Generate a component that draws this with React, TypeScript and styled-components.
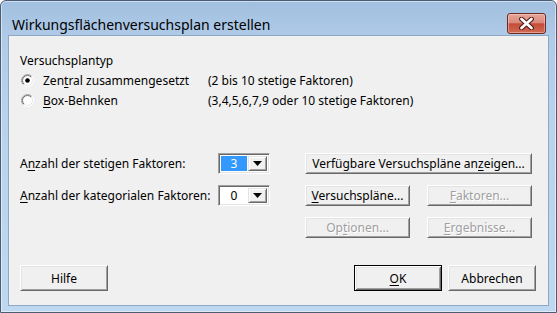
import React from "react";
import styled, { createGlobalStyle } from "styled-components";

const GlobalStyle = createGlobalStyle`
  html, body {
    margin: 0;
    padding: 0;
    background: #ffffff;
  }
  body {
    font-family: "Noto Sans", "Liberation Sans", sans-serif;
    font-size: 12px;
    color: #000;
  }
`;

const Window = styled.div`
  box-sizing: border-box;
  width: 557px;
  height: 313px;
  display: flex;
  flex-direction: column;
  padding: 0 7px 6px 7px;
  border: 1px solid #4a5d74;
  border-radius: 6px 6px 0 0;
  background: linear-gradient(180deg, #a1bfdf 0%, #b0cbe8 12%, #bad3ed 40%, #bed8f1 100%);
  box-shadow: inset 0 0 0 1px rgba(255, 255, 255, 0.5);
`;

const TitleBar = styled.div`
  box-sizing: border-box;
  height: 34px;
  display: flex;
  align-items: center;
  justify-content: space-between;
  padding: 10px 3px 0 4px;
`;

const Title = styled.div`
  padding-top: 3px;
  font-size: 14px;
  color: #000;
`;

const CloseButton = styled.div`
  box-sizing: border-box;
  width: 39px;
  height: 21px;
  display: flex;
  align-items: center;
  justify-content: center;
  border: 1px solid #6b2b25;
  border-radius: 3px;
  background: linear-gradient(180deg, #e6a699 0%, #d98a7c 45%, #c44d39 52%, #d06a52 100%);
  box-shadow: inset 0 0 0 1px rgba(255, 220, 210, 0.45);
`;

const Client = styled.div`
  flex: 1;
  display: flex;
  flex-direction: column;
  padding: 16px 12px 0 11px;
  border: 1px solid #8ea7c2;
  background: #f0f0f0;
`;

const GroupLabel = styled.div`
  height: 18px;
  line-height: 18px;
`;

const RadioGrid = styled.div`
  display: grid;
  grid-template-columns: 188px auto;
  grid-auto-rows: 20px;
  align-items: center;
`;

const RadioLabel = styled.div`
  display: flex;
  align-items: center;
  gap: 9px;
  padding-left: 1px;
`;

const FactorsArea = styled.div`
  display: flex;
  margin-top: 43px;
`;

const FactorColumn = styled.div`
  width: 285px;
  display: flex;
  flex-direction: column;
  gap: 11px;
`;

const FactorRow = styled.div`
  height: 21px;
  display: flex;
  align-items: center;
  justify-content: space-between;
  padding-right: 35px;
`;

const Combo = styled.div`
  box-sizing: border-box;
  width: 52px;
  height: 21px;
  display: flex;
  padding: 2px;
  background: #fff;
  border: 1px solid;
  border-color: #a0a0a0 #ffffff #ffffff #a0a0a0;
  box-shadow: inset 1px 1px #696969, inset -1px -1px #e3e3e3;
`;

const ComboValue = styled.div<{ $selected?: boolean }>`
  flex: 1;
  display: flex;
  align-items: center;
  justify-content: center;
  margin: 0 1px 0 0;
  background: ${(p) => (p.$selected ? "#3399ff" : "transparent")};
  color: ${(p) => (p.$selected ? "#fff" : "#000")};
`;

const ComboArrow = styled.div`
  box-sizing: border-box;
  width: 19px;
  display: flex;
  align-items: center;
  justify-content: center;
  background: #f0f0f0;
  border: 1px solid;
  border-color: #e3e3e3 #696969 #696969 #e3e3e3;
  box-shadow: inset 1px 1px #fff, inset -1px -1px #a0a0a0;
`;

const ButtonGrid = styled.div`
  display: grid;
  grid-template-columns: 105px 105px;
  grid-auto-rows: 21px;
  column-gap: 17px;
  row-gap: 11px;
`;

const Button = styled.button<{ $default?: boolean; $wide?: boolean }>`
  box-sizing: border-box;
  height: 100%;
  padding: 0;
  grid-column: ${(p) => (p.$wide ? "1 / span 2" : "auto")};
  font-family: inherit;
  font-size: 12px;
  color: #000;
  background: #f0f0f0;
  border: 1px solid;
  border-color: ${(p) => (p.$default ? "#000" : "#fff #696969 #696969 #fff")};
  box-shadow: ${(p) =>
    p.$default
      ? "inset 1px 1px #fff, inset -1px -1px #696969, inset 2px 2px #e3e3e3, inset -2px -2px #a0a0a0"
      : "inset 1px 1px #e3e3e3, inset -1px -1px #a0a0a0"};

  &:disabled {
    color: #a0a0a0;
    text-shadow: 1px 1px #fff;
  }
`;

const Footer = styled.div`
  display: flex;
  align-items: center;
  gap: 6px;
  margin-top: 27px;
  height: 26px;
`;

const FooterButton = styled(Button)`
  width: 88px;
  height: 26px;
`;

const Spacer = styled.div`
  flex: 1;
`;

const Key = styled.u`
  text-decoration-thickness: 1px;
  text-underline-offset: 2px;
`;

const RadioIcon = ({ checked }: { checked?: boolean }) => (
  <svg width="13" height="13" viewBox="0 0 13 13">
    <defs>
      <linearGradient id="ro" x1="0" y1="0" x2="1" y2="1">
        <stop offset="0.45" stopColor="#a0a0a0" />
        <stop offset="0.55" stopColor="#ffffff" />
      </linearGradient>
      <linearGradient id="ri" x1="0" y1="0" x2="1" y2="1">
        <stop offset="0.45" stopColor="#696969" />
        <stop offset="0.55" stopColor="#e3e3e3" />
      </linearGradient>
    </defs>
    <circle cx="6.5" cy="6.5" r="6" fill="#fff" stroke="url(#ro)" strokeWidth="1" />
    <circle cx="6.5" cy="6.5" r="5" fill="#fff" stroke="url(#ri)" strokeWidth="1" />
    {checked && <circle cx="6.5" cy="6.5" r="2.3" fill="#000" />}
  </svg>
);

const DownArrow = () => (
  <svg width="9" height="5" viewBox="0 0 9 5">
    <path d="M0 0 H9 L4.5 5 Z" fill="#000" />
  </svg>
);

const CloseGlyph = () => (
  <svg width="15" height="13" viewBox="0 0 15 13">
    <path
      d="M2.5 2 L12.5 11 M12.5 2 L2.5 11"
      fill="none"
      stroke="#4a1712"
      strokeWidth="4.8"
      strokeLinecap="round"
    />
    <path
      d="M2.5 2 L12.5 11 M12.5 2 L2.5 11"
      fill="none"
      stroke="#ffffff"
      strokeWidth="2.8"
      strokeLinecap="round"
    />
  </svg>
);

export default function App() {
  return (
    <>
      <GlobalStyle />
      <Window>
        <TitleBar>
          <Title>Wirkungsflächenversuchsplan erstellen</Title>
          <CloseButton>
            <CloseGlyph />
          </CloseButton>
        </TitleBar>
        <Client>
          <GroupLabel>Versuchsplantyp</GroupLabel>
          <RadioGrid>
            <RadioLabel>
              <RadioIcon checked />
              <span>
                Zen<Key>t</Key>ral zusammengesetzt
              </span>
            </RadioLabel>
            <span>(2 bis 10 stetige Faktoren)</span>
            <RadioLabel>
              <RadioIcon />
              <span>
                <Key>B</Key>ox-Behnken
              </span>
            </RadioLabel>
            <span>(3,4,5,6,7,9 oder 10 stetige Faktoren)</span>
          </RadioGrid>

          <FactorsArea>
            <FactorColumn>
              <FactorRow>
                <span>
                  A<Key>n</Key>zahl der stetigen Faktoren:
                </span>
                <Combo>
                  <ComboValue $selected>3</ComboValue>
                  <ComboArrow>
                    <DownArrow />
                  </ComboArrow>
                </Combo>
              </FactorRow>
              <FactorRow>
                <span>
                  <Key>A</Key>nzahl der kategorialen Faktoren:
                </span>
                <Combo>
                  <ComboValue>0</ComboValue>
                  <ComboArrow>
                    <DownArrow />
                  </ComboArrow>
                </Combo>
              </FactorRow>
            </FactorColumn>
            <ButtonGrid>
              <Button $wide>
                Verfügbare Versuchspläne an<Key>z</Key>eigen...
              </Button>
              <Button>
                <Key>V</Key>ersuchspläne...
              </Button>
              <Button disabled>
                <Key>F</Key>aktoren...
              </Button>
              <Button disabled>
                Op<Key>t</Key>ionen...
              </Button>
              <Button disabled>
                <Key>E</Key>rgebnisse...
              </Button>
            </ButtonGrid>
          </FactorsArea>

          <Footer>
            <FooterButton>Hilfe</FooterButton>
            <Spacer />
            <FooterButton $default>
              <Key>O</Key>K
            </FooterButton>
            <FooterButton>Abbrechen</FooterButton>
          </Footer>
        </Client>
      </Window>
    </>
  );
}
